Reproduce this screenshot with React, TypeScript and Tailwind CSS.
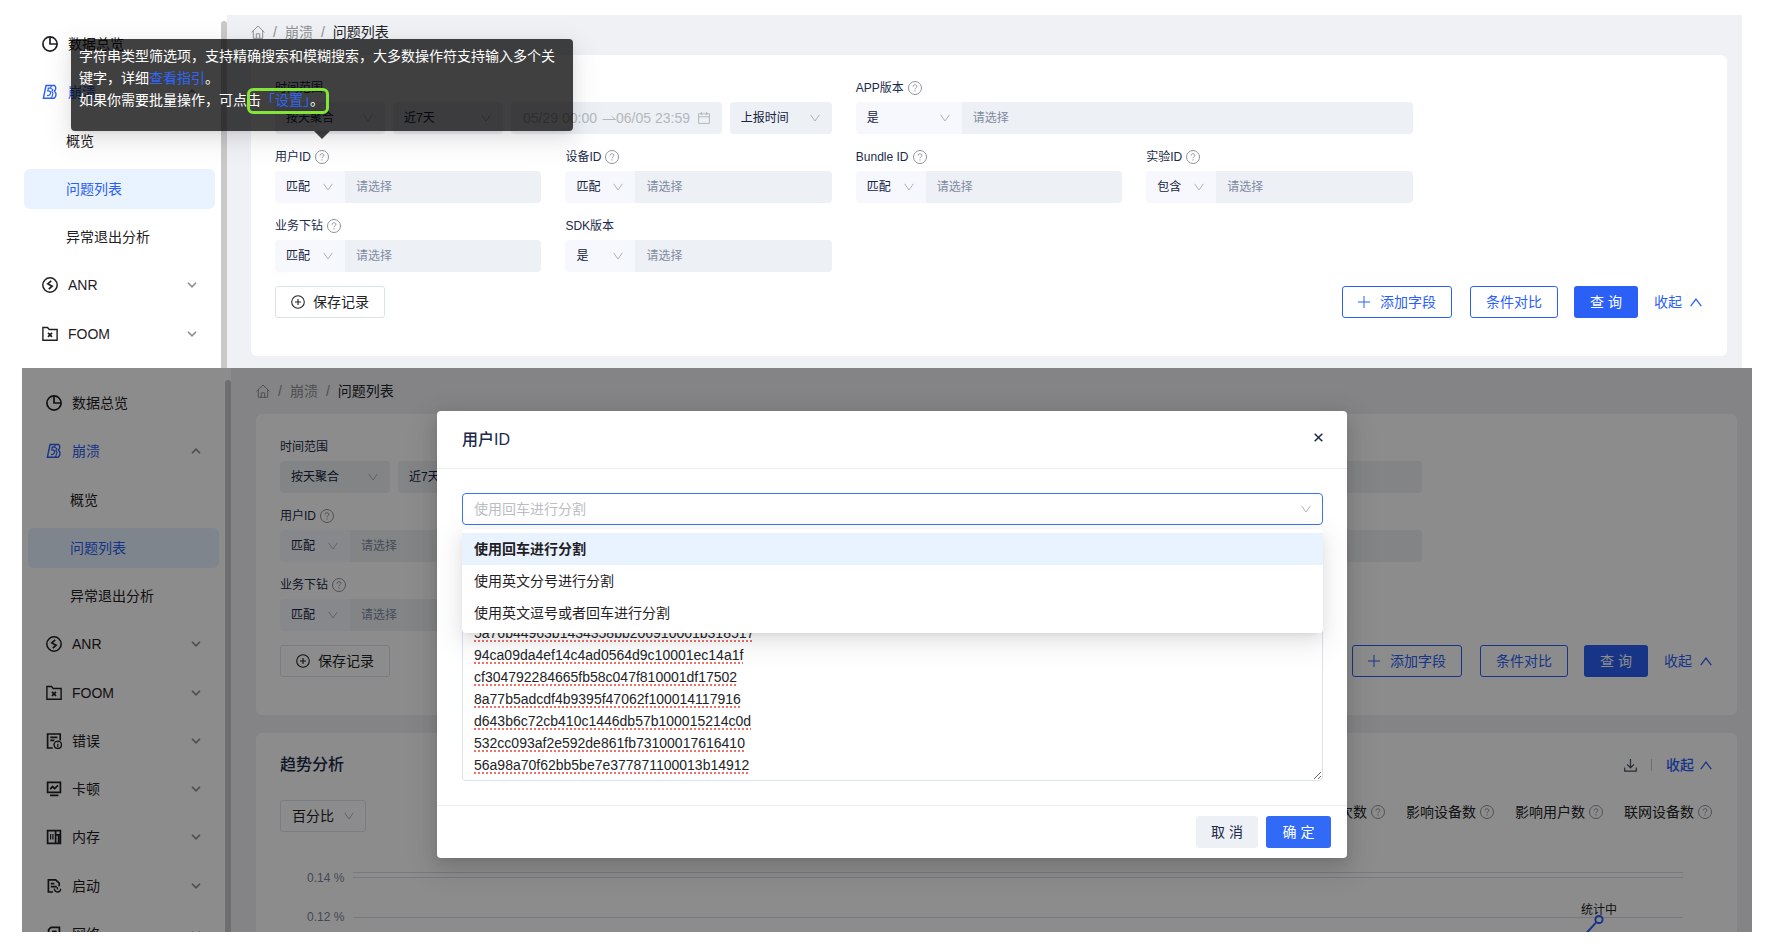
import { Fragment, useId } from "react";
import type { ReactNode } from "react";

/* ---------- icons ---------- */

function ThinDown({ className = "" }: { className?: string }) {
  return (
    <svg viewBox="0 0 10 8" className={`h-2 w-[10px] shrink-0 ${className}`} fill="none" stroke="currentColor" aria-hidden="true">
      <path d="M.6.8 5 7 9.4.8" />
    </svg>
  );
}

function ThinUp() {
  return (
    <svg viewBox="0 0 12 9" className="h-[9px] w-3 shrink-0" fill="none" stroke="currentColor" strokeWidth="1.3" aria-hidden="true">
      <path d="M.7 8.2 6 1.2l5.3 7" />
    </svg>
  );
}

function Caret({ up = false }: { up?: boolean }) {
  return (
    <svg viewBox="0 0 10 6" className="h-[6px] w-[10px] shrink-0 text-[#8a8d93]" fill="none" stroke="currentColor" strokeWidth="1.6" aria-hidden="true">
      <path d={up ? "M1 5.2 5 1.2l4 4" : "M1 .8l4 4 4-4"} />
    </svg>
  );
}

function HelpMark() {
  return (
    <svg viewBox="0 0 14 14" className="block size-[14px] shrink-0 text-[#8f9399]" fill="none" stroke="currentColor" aria-hidden="true">
      <circle cx="7" cy="7" r="6.5" />
      <path d="M5.1 5.6c0-1.2.8-1.9 1.9-1.9s1.9.7 1.9 1.7c0 1.3-1.9 1.4-1.9 2.8" />
      <path d="M7 9.3v1.2" />
    </svg>
  );
}

function HomeMark() {
  return (
    <svg viewBox="0 0 14 14" className="size-[14px] shrink-0" fill="none" stroke="currentColor" aria-hidden="true">
      <path d="M.6 7.3 7 1l6.4 6.3M2.3 6v7.3h9.4V6M5.3 13.3V8.8h3.4v4.5" />
    </svg>
  );
}

const glyphs: Record<string, ReactNode> = {
  pie: (
    <>
      <circle cx="8" cy="8" r="7.1" />
      <path d="M8 .9V8h7.1" />
    </>
  ),
  crash: (
    <>
      <path d="M4 1.5h8.6c1.6 1.6 1.6 4-.2 5.6 2.2 1.8 2.2 5-.2 7.2H1.4z" strokeWidth="1.4" />
      <path d="M8.6 4.1H6.3L5.8 7c2.6-.3 3 1.2 2.6 2.6-.4 1.6-2 2.2-3.4 1.8" strokeWidth="1.2" />
      <path d="M9.4 1.5 8.6 4.1l2.2 1.5-1 2 1.2 1.8-1.6 4.9" strokeWidth="1.1" />
    </>
  ),
  anr: (
    <>
      <circle cx="8" cy="8" r="7.2" strokeWidth="1.5" />
      <path d="M9.2 3.8 5.8 6.9l4.3 2.3-3.3 3" />
    </>
  ),
  foom: (
    <>
      <path d="M.9 14.2V1.5h4.6l1.7 2h7.9v10.7z" strokeWidth="1.4" />
      <path d="m6 6.9 4 4m0-4-4 4" />
    </>
  ),
  error: (
    <>
      <path d="M6.8 15H1.6V1h12.6v6.6" />
      <path d="M4.2 4.4h7.2M4.2 7.4h4.2" />
      <circle cx="11.8" cy="11.8" r="3.7" strokeWidth="1.4" />
      <path d="M11.8 11v3M11.8 9.4v.9" strokeWidth="1.2" />
    </>
  ),
  lag: (
    <>
      <path d="M1.6 1.4h12.8v10H1.6z" />
      <path d="M4.2 8.2 6.6 5.6l2 2L12 4.4M4 14.4h8.4" />
    </>
  ),
  memory: (
    <>
      <path d="M1.6 1.6h12.8v12.8H1.6zM9.6 1.6v12.8M9.6 5.8h4.8M12.6 5.8v8.4" />
      <path d="M4.6 5v5.4M6.9 5v5.4" strokeWidth="1.2" />
    </>
  ),
  launch: (
    <>
      <path d="M7 14H2.4V1.8h7.2l3.6 3.4v3" />
      <path d="M4.8 5.6h3.6M4.8 8.6h6" />
      <path d="M8.4 10.6c0 2 1 3.4 3 3.4s3.2-1.4 3.2-3.2M11.4 9v2.6" strokeWidth="1.4" />
    </>
  ),
  network: (
    <>
      <path d="M2.6 14.4V3.6L5 1.4h8.4v13z" />
      <path d="M5.4 8.6 7 5.4h3.6M8 9.6h5" />
    </>
  ),
};

function Glyph({ name }: { name: string }) {
  return (
    <svg viewBox="0 0 16 16" className="size-4 shrink-0" fill="none" stroke="currentColor" strokeWidth="1.7" aria-hidden="true">
      {glyphs[name]}
    </svg>
  );
}

/* ---------- sidebar ---------- */

type NavItem = { text: string; icon?: string; state?: "open" | "active" | "plain" };

const navItems: NavItem[] = [
  { text: "数据总览", icon: "pie", state: "plain" },
  { text: "崩溃", icon: "crash", state: "open" },
  { text: "概览" },
  { text: "问题列表", state: "active" },
  { text: "异常退出分析" },
  { text: "ANR", icon: "anr" },
  { text: "FOOM", icon: "foom" },
  { text: "错误", icon: "error" },
  { text: "卡顿", icon: "lag" },
  { text: "内存", icon: "memory" },
  { text: "启动", icon: "launch" },
  { text: "网络", icon: "network" },
];

function Sidebar() {
  return (
    <aside className="flex w-[209px] shrink-0 bg-white">
      <nav className="flex h-[586px] flex-1 flex-col justify-between px-[6px] pt-[15px]">
        {navItems.map((item) => {
          const tone =
            item.state === "active"
              ? "bg-[#e8f3ff] text-[#2b60f6]"
              : item.state === "open"
                ? "text-[#2b60f6]"
                : "text-[#1f2023]";
          return (
            <a
              key={item.text}
              href="#"
              className={`flex h-10 shrink-0 items-center rounded-md pr-[18px] ${item.icon ? "gap-[10px] pl-[18px]" : "pl-[42px]"} ${tone}`}
            >
              {item.icon && <Glyph name={item.icon} />}
              <span className="flex-1">{item.text}</span>
              {item.icon && item.state !== "plain" && <Caret up={item.state === "open"} />}
            </a>
          );
        })}
      </nav>
      <div className="flex w-[6px] pt-3">
        <div className="flex-1 rounded-t-full bg-[#c9c9ca]" />
      </div>
    </aside>
  );
}

/* ---------- filter form ---------- */

function Picker({ value, label, className }: { value: string; label: string; className: string }) {
  return (
    <div className={`relative h-8 shrink-0 ${className}`}>
      <select aria-label={label} className="h-full w-full appearance-none pl-[11px] text-xs text-[#16243f] outline-none">
        <option>{value}</option>
      </select>
      <ThinDown className="pointer-events-none absolute top-3 right-3 text-[#aeb3bb]" />
    </div>
  );
}

type FieldProps = { label: string; op: string; help?: boolean; wide?: boolean; tip?: ReactNode };

function Field({ label, op, help = true, wide = false, tip }: FieldProps) {
  const id = useId();
  return (
    <div className={wide ? "col-span-2" : ""}>
      <div className="mb-1 flex h-5 items-center gap-1 text-xs">
        <label htmlFor={id}>{label}</label>
        {help && (
          <span className="relative">
            <HelpMark />
            {tip}
          </span>
        )}
      </div>
      <div className="flex overflow-hidden rounded-sm">
        <Picker value={op} label={`${label} 条件`} className={wide ? "w-[106px] bg-[#f6f8fd]" : "w-[70px] bg-[#f6f8fd]"} />
        <input
          id={id}
          placeholder="请选择"
          className="h-8 min-w-0 flex-1 bg-[#edf0f5] px-[11px] text-xs outline-none placeholder:text-[#7f8ba2]"
        />
      </div>
    </div>
  );
}

function TimeRange() {
  return (
    <div className="col-span-2">
      <div className="mb-1 flex h-5 items-center text-xs">时间范围</div>
      <div className="flex gap-2">
        <Picker value="按天聚合" label="聚合方式" className="w-[110px] rounded-sm bg-[#edf0f5]" />
        <Picker value="近7天" label="时间范围" className="w-[110px] rounded-sm bg-[#edf0f5]" />
        <div className="flex h-8 min-w-0 flex-1 items-center rounded-sm bg-[#edf0f5] px-3 text-[#b4b8be]">
          <input aria-label="开始时间" disabled defaultValue="05/29 00:00" className="w-[79px]" />
          <svg viewBox="0 0 14 8" className="h-2 w-[14px] shrink-0" fill="none" stroke="currentColor" aria-hidden="true">
            <path d="M.5 5.5h13L9.6 2.4" />
          </svg>
          <input aria-label="结束时间" disabled defaultValue="06/05 23:59" className="min-w-0 flex-1" />
          <svg viewBox="0 0 12 12" className="size-3 shrink-0" fill="none" stroke="currentColor" aria-hidden="true">
            <path d="M.6 1.8h10.8v9.6H.6zM.6 4.8h10.8M3.4 0v3M8.6 0v3" />
          </svg>
        </div>
        <Picker value="上报时间" label="时间类型" className="w-[102px] rounded-sm bg-[#edf0f5]" />
      </div>
    </div>
  );
}

const outline = "flex h-8 items-center rounded-[3px] border border-[#2b60f6]";

function FilterCard({ tip }: { tip?: ReactNode }) {
  return (
    <section className="rounded-md bg-white px-6 pt-[23px] pb-[38px] text-[#1b2a4a]">
      <div className="grid grid-cols-5 gap-x-6 gap-y-[13px]">
        <TimeRange />
        <Field label="APP版本" op="是" wide />
        <div />
        <Field label="用户ID" op="匹配" tip={tip} />
        <Field label="设备ID" op="匹配" />
        <Field label="Bundle ID" op="匹配" />
        <Field label="实验ID" op="包含" />
        <div />
        <Field label="业务下钻" op="匹配" />
        <Field label="SDK版本" op="是" help={false} />
      </div>
      <div className="mt-[14px] flex items-center">
        <button className="flex h-8 w-[110px] items-center justify-center gap-2 rounded-[3px] border border-[#dbe2ef] text-[#222326]">
          <svg viewBox="0 0 14 14" className="size-[14px]" fill="none" stroke="currentColor" strokeWidth="1.1" aria-hidden="true">
            <path d="M7 4v6M4 7h6" />
            <circle cx="7" cy="7" r="6.3" />
          </svg>
          保存记录
        </button>
        <div className="ml-auto flex items-center pr-px text-[#2b60f6]">
          <button className={`${outline} mr-[18px] w-[110px] justify-center gap-[10px]`}>
            <svg viewBox="0 0 12 12" className="size-3" fill="none" stroke="currentColor" aria-hidden="true">
              <path d="M6 0v12M0 6h12" />
            </svg>
            添加字段
          </button>
          <button className={`${outline} mr-4 w-[88px] justify-center`}>条件对比</button>
          <button className="mr-4 h-8 w-16 rounded-[3px] bg-[#2b60f6] text-white">查 询</button>
          <button className="flex items-center gap-2">
            收起
            <ThinUp />
          </button>
        </div>
      </div>
    </section>
  );
}

/* ---------- trend chart ---------- */

function TrendCard() {
  return (
    <section className="mt-[18px] rounded-md bg-white px-6 pt-5 pb-16">
      <div className="flex h-6 items-center">
        <h2 className="text-base font-medium text-[#1b2a4a]">趋势分析</h2>
        <button aria-label="下载" className="ml-auto text-[#4b5263]">
          <svg viewBox="0 0 13 13" className="size-[13px]" fill="none" stroke="currentColor" strokeWidth="1.2" aria-hidden="true">
            <path d="M6.5 0v8.6M3 5.4l3.5 3.4L10 5.4M.7 8.6v3.6h11.6V8.6" />
          </svg>
        </button>
        <span className="mx-[14px] h-3 w-px bg-[#c3c8d3]" />
        <button className="flex items-center gap-[6px] pr-px font-medium text-[#2b60f6]">
          收起
          <ThinUp />
        </button>
      </div>
      <div className="mt-[23px] flex items-start">
        <div className="relative h-8 w-[86px] rounded-[3px] border border-[#dbe2ef]">
          <select aria-label="数值单位" className="h-full w-full appearance-none pl-[11px] text-[#222326] outline-none">
            <option>百分比</option>
          </select>
          <ThinDown className="pointer-events-none absolute top-[11px] right-[11px] text-[#aeb3bb]" />
        </div>
        <ul className="ml-auto flex h-6 items-center gap-[21px] pr-px text-[#222326]">
          {["崩溃次数", "影响设备数", "影响用户数", "联网设备数"].map((text) => (
            <li key={text} className="flex items-center gap-1">
              {text}
              <HelpMark />
            </li>
          ))}
        </ul>
      </div>
      <div className="relative mt-9 mr-[30px] ml-[27px] flex flex-col gap-[19px] text-xs text-[#7d86a0]">
        {["0.14 %", "0.12 %"].map((tick, row) => (
          <div key={tick} className="flex h-5 items-center gap-2">
            <span className="w-[38px]">{tick}</span>
            <div className={row === 0 ? "mb-[6px] h-[6px] flex-1 border-y border-[#d9dcea]" : "h-px flex-1 bg-[#d9dcea]"} />
          </div>
        ))}
        <div className="absolute top-8 right-[66px] leading-5 text-[#222326]">统计中</div>
        <svg viewBox="0 0 24 40" className="absolute top-[46px] right-[79px] h-10 w-6" fill="none" stroke="#2b60f6" strokeWidth="2" aria-hidden="true">
          <circle cx="19" cy="5.5" r="3.6" />
          <path d="M16.2 8.4 0 26" />
        </svg>
      </div>
    </section>
  );
}

/* ---------- page shell ---------- */

function Workspace({ tip, trend = false }: { tip?: ReactNode; trend?: boolean }) {
  return (
    <div className="flex">
      <Sidebar />
      <div className={`min-w-0 flex-1 bg-[#f0f1f5] pr-[15px] ${trend ? "pl-[25px]" : "pl-6"}`}>
        <nav aria-label="面包屑" className="flex h-[46px] items-center gap-2 pb-px text-[#8e9196]">
          <HomeMark />
          {["崩溃", "问题列表"].map((crumb, i) => (
            <Fragment key={crumb}>
              <span>/</span>
              <a href="#" className={i === 1 ? "text-[#222326]" : ""}>
                {crumb}
              </a>
            </Fragment>
          ))}
        </nav>
        <FilterCard tip={tip} />
        {trend && <TrendCard />}
      </div>
    </div>
  );
}

function GuideTip() {
  return (
    <div
      role="tooltip"
      className="absolute bottom-full left-1/2 z-10 mb-[19px] w-[502px] -translate-x-1/2 rounded-sm bg-black/75 px-2 pt-[6px] pb-5 text-sm leading-[22px] text-white shadow-[0_3px_6px_-4px_rgba(0,0,0,0.12),0_6px_16px_rgba(0,0,0,0.08),0_9px_28px_8px_rgba(0,0,0,0.05)]"
    >
      字符串类型筛选项，支持精确搜索和模糊搜索，大多数操作符支持输入多个关键字，详细
      <a href="#" className="text-[#2f66f6]">
        查看指引
      </a>
      。
      <br />
      如果你需要批量操作，可点
      <span className="relative">
        击
        <a href="#" className="text-[#2f66f6]">
          「设置」
        </a>
        。
        <span className="absolute -top-1 -right-[5px] -bottom-[6px] left-0 rounded-md border-[3px] border-[#83e538]" />
      </span>
      <svg viewBox="0 0 16 8" className="absolute top-full left-1/2 h-2 w-4 -translate-x-1/2" aria-hidden="true">
        <path d="M0 0h16L8 8z" className="fill-black/75" />
      </svg>
    </div>
  );
}

/* ---------- batch dialog ---------- */

const choices = ["使用回车进行分割", "使用英文分号进行分割", "使用英文逗号或者回车进行分割"];

const userIds = [
  "",
  "",
  "",
  "5a76b44963b1434358bb206910001b318517",
  "94ca09da4ef14c4ad0564d9c10001ec14a1f",
  "cf304792284665fb58c047f810001df17502",
  "8a77b5adcdf4b9395f47062f100014117916",
  "d643b6c72cb410c1446db57b100015214c0d",
  "532cc093af2e592de861fb73100017616410",
  "56a98a70f62bb5be7e377871100013b14912",
].join("\n");

function BatchDialog() {
  return (
    <div
      role="dialog"
      aria-label="用户ID"
      className="absolute top-[43px] right-[405px] left-[415px] rounded bg-white shadow-[0_3px_6px_-4px_rgba(0,0,0,0.12),0_6px_16px_rgba(0,0,0,0.1),0_9px_28px_8px_rgba(0,0,0,0.08)]"
    >
      <header className="flex h-[58px] items-center justify-between border-b border-[#ececef] pr-6 pl-[25px] text-[#1b2a4a]">
        <h2 className="text-base font-medium">用户ID</h2>
        <button aria-label="关闭" className="pb-1">
          <svg viewBox="0 0 9 9" className="size-[9px]" fill="none" stroke="currentColor" strokeWidth="1.5" aria-hidden="true">
            <path d="m.7.7 7.6 7.6M8.3.7.7 8.3" />
          </svg>
        </button>
      </header>
      <div className="py-6 pr-6 pl-[25px]">
        <div className="relative mb-[26px]">
          <input
            role="combobox"
            aria-label="分割方式"
            aria-expanded="true"
            aria-controls="split-choices"
            readOnly
            placeholder="使用回车进行分割"
            className="block h-8 w-full rounded-sm border border-[#3a74f2] px-[11px] outline-none placeholder:text-[#bcbec2]"
          />
          <ThinDown className="pointer-events-none absolute top-3 right-3 text-[#b4b6ba]" />
          <ul
            id="split-choices"
            role="listbox"
            className="absolute inset-x-0 top-9 rounded-sm bg-white py-1 text-[#1f2023] shadow-[0_3px_6px_-4px_rgba(0,0,0,0.12),0_6px_16px_rgba(0,0,0,0.08),0_9px_28px_8px_rgba(0,0,0,0.05)]"
          >
            {choices.map((text, i) => (
              <li
                key={text}
                role="option"
                aria-selected={i === 0}
                className={`flex h-8 items-center px-3 ${i === 0 ? "bg-[#e8f3ff] font-bold" : ""}`}
              >
                {text}
              </li>
            ))}
          </ul>
        </div>
        <textarea
          aria-label="用户ID列表"
          rows={10}
          defaultValue={userIds}
          spellCheck={false}
          className="block w-full resize-y overflow-hidden rounded-sm border border-[#dbe2ef] px-[11px] py-1 leading-[22px] text-[#222326] underline decoration-[#ee7068] decoration-dotted decoration-2 underline-offset-2 outline-none [text-decoration-skip-ink:none]"
        />
      </div>
      <footer className="flex justify-end gap-2 border-t border-[#ececef] px-4 py-[10px]">
        <button className="h-8 w-[62px] rounded-[3px] bg-[#edf0f5] text-[#1b2a4a]">取 消</button>
        <button className="h-8 w-[65px] rounded-[3px] bg-[#316af7] text-white">确 定</button>
      </footer>
    </div>
  );
}

export default function App() {
  return (
    <main className="bg-white pt-[15px] pb-[14px] font-['Liberation_Sans','Noto_Sans_CJK_SC',sans-serif] text-sm">
      <div className="mr-[26px] ml-[18px] h-[353px] overflow-hidden">
        <div className="-mt-[6px]">
          <Workspace tip={<GuideTip />} />
        </div>
      </div>
      <div className="relative mr-4 ml-[22px] h-[564px] overflow-hidden">
        <Workspace trend />
        <div className="absolute inset-0 bg-black/45" />
        <BatchDialog />
      </div>
    </main>
  );
}
